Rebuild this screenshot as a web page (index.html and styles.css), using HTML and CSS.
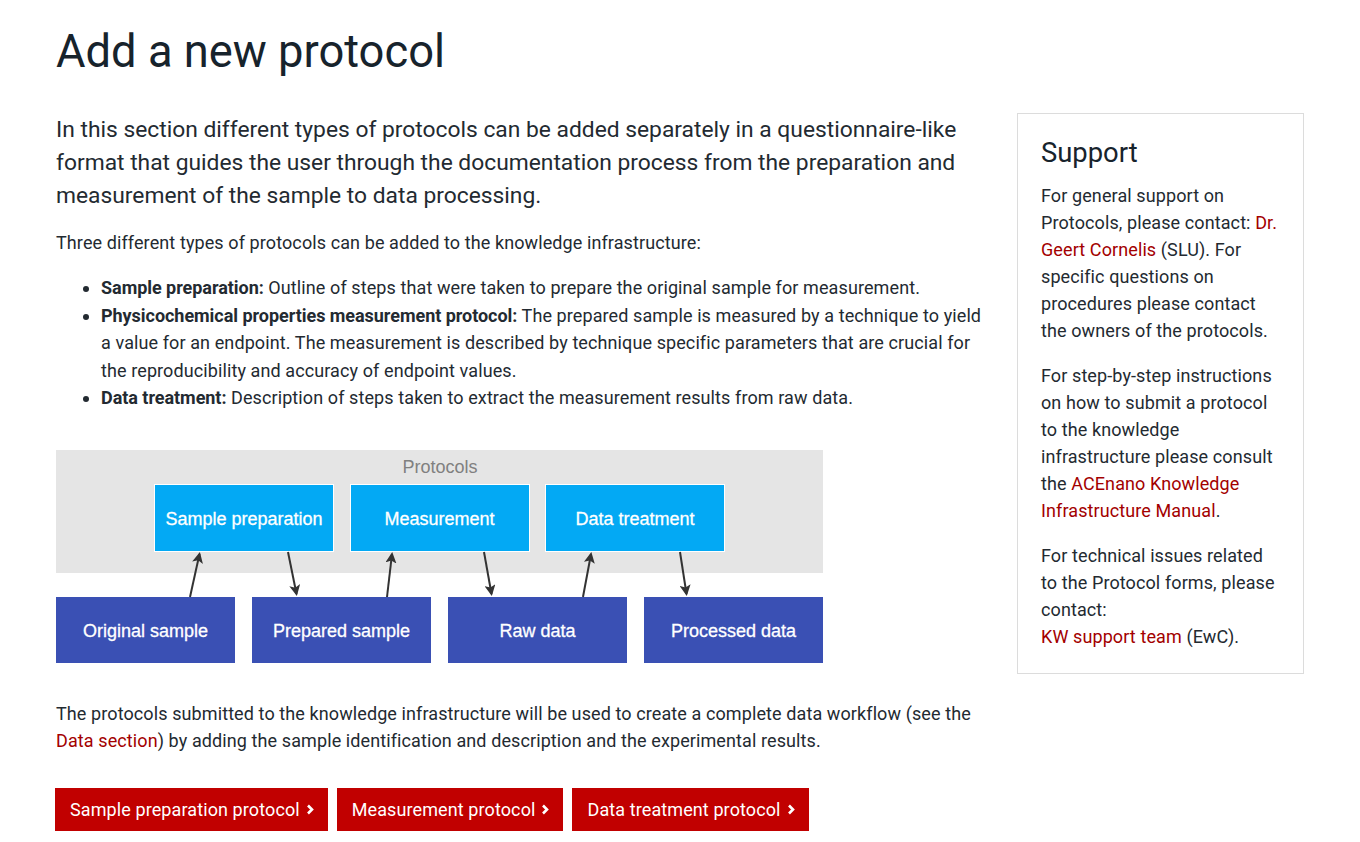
FILE: index.html
```html
<!DOCTYPE html>
<html lang="en">
<head>
<meta charset="utf-8">
<title>Add a new protocol</title>
<link rel="stylesheet" href="styles.css">
</head>
<body>
<div class="page">
  <h1 class="title">Add a new protocol</h1>
  <div class="row">
    <main class="main">
      <p class="lead">In this section different types of protocols can be added separately in a questionnaire-like format that guides the user through the documentation process from the preparation and measurement of the sample to data processing.</p>
      <p class="text">Three different types of protocols can be added to the knowledge infrastructure:</p>
      <ul class="types">
        <li><b>Sample preparation:</b> Outline of steps that were taken to prepare the original sample for measurement.</li>
        <li><b>Physicochemical properties measurement protocol:</b> The prepared sample is measured by a technique to yield a value for an endpoint. The measurement is described by technique specific parameters that are crucial for the reproducibility and accuracy of endpoint values.</li>
        <li><b>Data treatment:</b> Description of steps taken to extract the measurement results from raw data.</li>
      </ul>

      <div class="diagram">
        <div class="band">
          <div class="band-label">Protocols</div>
          <div class="proto-row">
            <div class="proto">Sample preparation</div>
            <div class="proto">Measurement</div>
            <div class="proto">Data treatment</div>
          </div>
        </div>
        <div class="data-row">
          <div class="data">Original sample</div>
          <div class="data">Prepared sample</div>
          <div class="data">Raw data</div>
          <div class="data">Processed data</div>
        </div>
        <svg class="arrows" width="767" height="213" viewBox="0 0 767 213">
          <defs>
            <marker id="ah" markerWidth="11" markerHeight="11" refX="9" refY="5.5" orient="auto" markerUnits="userSpaceOnUse">
              <path d="M0,0 L11,5.5 L0,11 L2.5,5.5 Z" fill="#333"/>
            </marker>
          </defs>
          <g stroke="#333" stroke-width="2" fill="none" marker-end="url(#ah)">
            <line x1="134" y1="147" x2="143.5" y2="104"/>
            <line x1="232" y1="102" x2="240.5" y2="144"/>
            <line x1="331" y1="147" x2="336" y2="104"/>
            <line x1="428" y1="102" x2="435.5" y2="144"/>
            <line x1="527" y1="147" x2="535" y2="104"/>
            <line x1="624" y1="102" x2="630.5" y2="144"/>
          </g>
        </svg>
      </div>

      <p class="text">The protocols submitted to the knowledge infrastructure will be used to create a complete data workflow (see the <a href="#">Data section</a>) by adding the sample identification and description and the experimental results.</p>

      <div class="buttons">
        <a class="btn" href="#">Sample preparation protocol <svg class="chev" width="8" height="11" viewBox="0 0 8 11"><polyline points="2,1.5 6,5.5 2,9.5" fill="none" stroke="#fff" stroke-width="2.6"/></svg></a>
        <a class="btn" href="#">Measurement protocol <svg class="chev" width="8" height="11" viewBox="0 0 8 11"><polyline points="2,1.5 6,5.5 2,9.5" fill="none" stroke="#fff" stroke-width="2.6"/></svg></a>
        <a class="btn" href="#">Data treatment protocol <svg class="chev" width="8" height="11" viewBox="0 0 8 11"><polyline points="2,1.5 6,5.5 2,9.5" fill="none" stroke="#fff" stroke-width="2.6"/></svg></a>
      </div>
    </main>

    <aside class="support">
      <h2 class="support-title">Support</h2>
      <p>For general support on Protocols, please contact: <a href="#">Dr. Geert Cornelis</a> (SLU). For specific questions on procedures please contact the owners of the protocols.</p>
      <p>For step-by-step instructions on how to submit a protocol to the knowledge infrastructure please consult the <a href="#">ACEnano Knowledge Infrastructure Manual</a>.</p>
      <p>For technical issues related to the Protocol forms, please contact:<br><a href="#">KW support team</a> (EwC).</p>
    </aside>
  </div>
</div>
</body>
</html>
```

FILE: styles.css
```css
html, body {
  margin: 0;
  padding: 0;
  background: #fff;
}
body {
  font-family: Roboto, "Liberation Sans", sans-serif;
  font-size: 18px;
  line-height: 27px;
  letter-spacing: 0.1px;
  color: #232a31;
}
a {
  color: #a30000;
  text-decoration: none;
}
.page {
  padding: 0 56px;
}
.title {
  margin: 0;
  padding-top: 27px;
  font-size: 45.3px;
  line-height: 50px;
  font-weight: 400;
  letter-spacing: 0;
  color: #17232c;
  height: 86px;
}
.row {
  display: flex;
  align-items: flex-start;
  gap: 32px;
}
.main {
  width: 929px;
  flex: none;
}
.lead {
  margin: 0 0 17px;
  font-size: 22.8px;
  line-height: 33px;
  letter-spacing: 0;
}
.text {
  margin: 0;
}
.types {
  margin: 18px 0 38px;
  padding-left: 45px;
  line-height: 27.5px;
}
.types b {
  font-weight: 700;
  letter-spacing: -0.04px;
}
.diagram {
  position: relative;
  width: 767px;
  height: 213px;
  margin-bottom: 37px;
  font-family: "Liberation Sans", Arial, sans-serif;
  font-size: 18px;
  letter-spacing: 0;
  color: #fff;
  -webkit-text-stroke: 0.3px #fff;
}
.band {
  background: #e5e5e5;
  height: 123px;
  padding-left: 98px;
  box-sizing: border-box;
}
.band-label {
  width: 572px;
  text-align: center;
  color: #808080;
  -webkit-text-stroke: 0;
  line-height: 20px;
  padding-top: 7px;
  height: 27px;
}
.proto-row {
  display: flex;
  gap: 15.5px;
}
.proto {
  width: 180px;
  height: 68px;
  box-sizing: border-box;
  background: #03a9f4;
  border: 1px solid #fff;
  padding-top: 3px;
  display: flex;
  align-items: center;
  justify-content: center;
}
.data-row {
  display: flex;
  gap: 17px;
  margin-top: 24px;
}
.data {
  width: 179px;
  height: 66px;
  box-sizing: border-box;
  padding-top: 4px;
  background: #3a50b4;
  display: flex;
  align-items: center;
  justify-content: center;
}
.arrows {
  position: absolute;
  left: 0;
  top: 0;
}
.buttons {
  display: flex;
  gap: 9px;
  margin-top: 34px;
}
.btn {
  display: inline-flex;
  align-items: center;
  gap: 6px;
  height: 43px;
  padding: 1px 14px 0 15px;
  box-sizing: border-box;
  background: #c10000;
  color: #fff;
  font-size: 18px;
}
.btn:first-child {
  margin-left: -1px;
}
.chev {
  display: block;
}
.support {
  width: 287px;
  flex: none;
  box-sizing: border-box;
  border: 1px solid #dcdcdc;
  padding: 22px 23px 5px;
}
.support-title {
  margin: 0 0 12px;
  font-size: 27.4px;
  line-height: 34px;
  font-weight: 400;
  letter-spacing: 0;
  color: #17232c;
}
.support p {
  margin: 0 0 18px;
}
```
